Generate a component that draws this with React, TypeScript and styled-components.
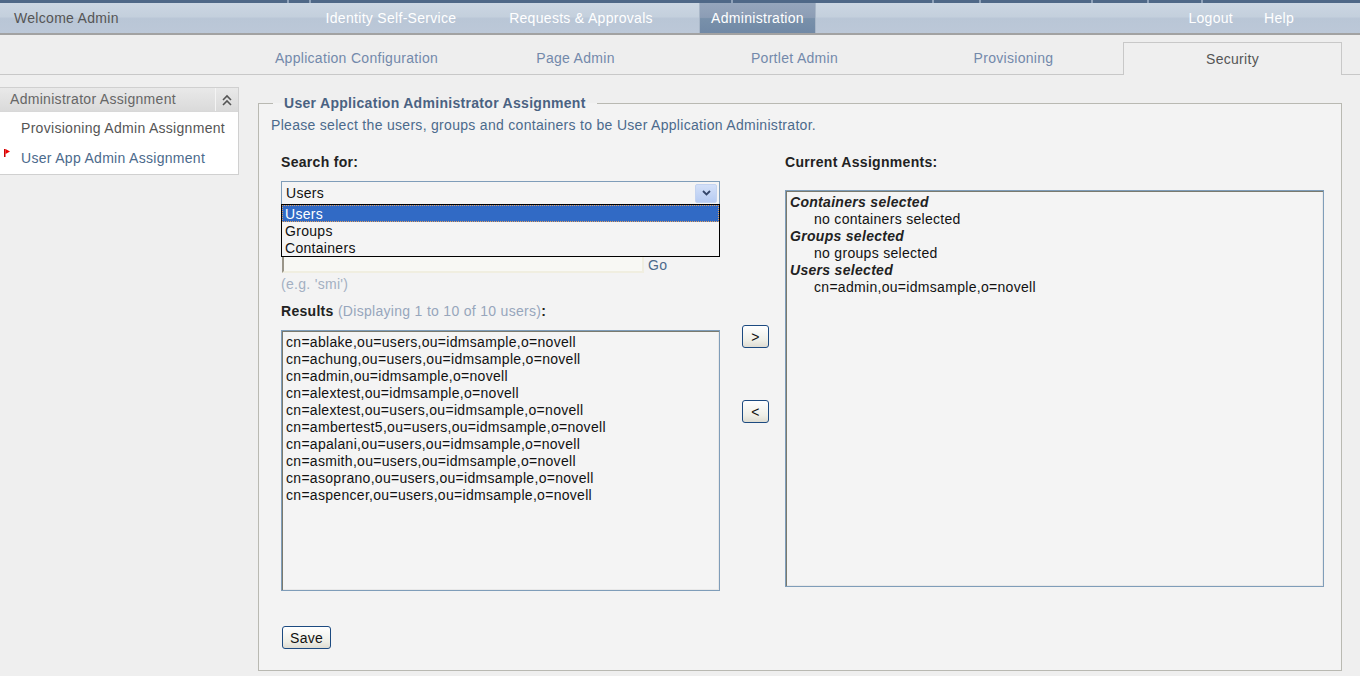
import * as React from 'react'
import styled, { createGlobalStyle, css } from 'styled-components'

const GlobalStyle = createGlobalStyle`
  html, body {
    margin: 0;
    padding: 0;
    background: #efefef;
    font-family: 'Liberation Sans', Arial, sans-serif;
    font-size: 14px;
    color: #222;
  }
  #root {
    min-height: 676px;
  }
`

const font = css`
  font-family: 'Liberation Sans', Arial, sans-serif;
  font-size: 14px;
  letter-spacing: 0.3px;
`

/* ---------- header ---------- */

const Strip = styled.div`
  display: flex;
  gap: 2px;
  height: 3px;
  background: #8fa2b9;
`

const StripSegment = styled.div<{ $w: number }>`
  flex: ${(p) => (p.$w ? `0 0 ${p.$w}px` : '1 1 auto')};
  background: #4f6887;
`

const TopBar = styled.div`
  display: flex;
  align-items: stretch;
  height: 30px;
  background: linear-gradient(#cbd6e2 0%, #c4d0dd 45%, #b9c6d6 52%, #bcc8d8 100%);
  border-bottom: 2px solid #a2a2a2;
`

const Welcome = styled.div`
  ${font};
  flex: 0 0 286px;
  padding-left: 14px;
  line-height: 30px;
  color: #555;
`

const NavItem = styled.div<{ $w: number; $active?: boolean }>`
  ${font};
  flex: 0 0 ${(p) => p.$w}px;
  line-height: 30px;
  text-align: center;
  color: #fff;
  white-space: nowrap;
  ${(p) =>
    p.$active &&
    css`
      margin-left: 19px;
      background: linear-gradient(#96a6bc 0%, #8c9db5 48%, #7890aa 52%, #7189a6 100%);
      box-shadow: inset 1px 0 #a9b7c8, inset -1px 0 #a9b7c8;
    `}
`

const NavRight = styled.div`
  display: flex;
  gap: 31px;
  margin-left: auto;
  padding-right: 66px;
`

const NavLink = styled.div`
  ${font};
  line-height: 30px;
  color: #fff;
`

/* ---------- sub tabs ---------- */

const TabRow = styled.div`
  display: flex;
  align-items: flex-end;
  height: 39px;
  padding-left: 247px;
  border-bottom: 1px solid #c8c8c8;
  background: #eeeeee;
`

const Tab = styled.div<{ $active?: boolean }>`
  ${font};
  flex: 0 0 219px;
  box-sizing: border-box;
  height: 32px;
  line-height: 32px;
  text-align: center;
  color: #7389ab;
  ${(p) =>
    p.$active &&
    css`
      color: #555;
      background: #efefef;
      border: 1px solid #c8c8c8;
      border-bottom: none;
      margin-bottom: -1px;
      height: 33px;
      line-height: 32px;
    `}
`

/* ---------- body ---------- */

const Body = styled.div`
  display: flex;
  align-items: flex-start;
`

const Sidebar = styled.div`
  flex: 0 0 238px;
  margin-top: 12px;
  background: #fff;
  border: 1px solid #d0d0d0;
  border-left: none;
`

const SideHeader = styled.div`
  display: flex;
  height: 23px;
  background: linear-gradient(#e9e9e9, #dadada);
  border-bottom: 1px solid #d8d8d8;
`

const SideTitle = styled.div`
  ${font};
  flex: 1;
  padding-left: 10px;
  line-height: 23px;
  color: #666;
`

const Collapse = styled.div`
  flex: 0 0 22px;
  display: flex;
  align-items: center;
  justify-content: center;
  border-left: 1px solid #f4f4f4;
`

const SideList = styled.div`
  padding: 1px 0 1px;
`

const SideItem = styled.div<{ $current?: boolean }>`
  ${font};
  position: relative;
  height: 30px;
  line-height: 30px;
  padding-left: 21px;
  color: ${(p) => (p.$current ? '#4b6a8c' : '#555')};
`

const Flag = styled.svg`
  position: absolute;
  left: 4px;
  top: 6px;
`

const Fieldset = styled.fieldset`
  flex: 0 0 auto;
  box-sizing: border-box;
  width: 1084px;
  height: 576px;
  margin: 20px 0 0 19px;
  padding: 0 12px 20px;
  border: 1px solid #b9b9b2;
  background: #f3f3f3;
`

const Legend = styled.legend`
  ${font};
  font-weight: bold;
  color: #4a6282;
  padding: 0 11px;
  margin-left: 2px;
  line-height: 16px;
`

const Intro = styled.div`
  ${font};
  margin-top: 6px;
  line-height: 16px;
  color: #4b6a8c;
`

const Columns = styled.div`
  display: grid;
  grid-template-columns: 439px 65px 539px;
  margin: 21px 0 0 10px;
`

const Col = styled.div`
  position: relative;
  display: flex;
  flex-direction: column;
  align-items: flex-start;
`

const Label = styled.div<{ $gap?: number }>`
  ${font};
  font-weight: bold;
  line-height: 16px;
  color: #222;
  margin-bottom: ${(p) => p.$gap ?? 11}px;
`

const Note = styled.span`
  font-weight: normal;
  color: #97a6bc;
`

const Select = styled.div`
  ${font};
  box-sizing: border-box;
  display: flex;
  align-items: center;
  width: 439px;
  height: 24px;
  padding: 0 2px 0 4px;
  border: 1px solid #7f9db9;
  background: #f4f4f4;
  color: #111;
`

const SelectValue = styled.div`
  flex: 1;
`

const SelectButton = styled.div`
  display: flex;
  align-items: center;
  justify-content: center;
  width: 22px;
  height: 19px;
  border-radius: 2px;
  background: linear-gradient(#d3e0f8, #b6cbf2);
  border: 1px solid #c3d3f0;
  box-sizing: border-box;
`

const DropList = styled.div`
  position: absolute;
  top: 50px;
  left: 0;
  z-index: 2;
  box-sizing: border-box;
  width: 439px;
  border: 1px solid #000;
  background: #f4f4f4;
`

const DropOption = styled.div<{ $selected?: boolean }>`
  ${font};
  box-sizing: border-box;
  height: 17px;
  line-height: 16px;
  padding-left: 2px;
  color: ${(p) => (p.$selected ? '#fff' : '#111')};
  background: ${(p) => (p.$selected ? '#316ac5' : 'transparent')};
  border: 1px dotted ${(p) => (p.$selected ? '#e0a060' : 'transparent')};
`

const SearchRow = styled.div`
  display: flex;
  align-items: flex-end;
  margin-top: 48px;
`

const TextInput = styled.div`
  box-sizing: border-box;
  width: 362px;
  height: 20px;
  margin-left: 1px;
  background: #f8f8f4;
  border-left: 2px solid #9a9588;
  border-bottom: 2px solid #f0eee0;
  border-right: 2px solid #f0eee0;
`

const GoLink = styled.div`
  ${font};
  margin-left: 4px;
  line-height: 16px;
  color: #4b6a8c;
`

const Hint = styled.div`
  ${font};
  line-height: 16px;
  margin: 3px 0 11px;
  color: #a3b0c2;
`

const ListBox = styled.div<{ $h: number; $w: number }>`
  ${font};
  box-sizing: border-box;
  width: ${(p) => p.$w}px;
  height: ${(p) => p.$h}px;
  padding: 3px 4px;
  border: 1px solid #7f9db9;
  box-shadow: inset 1px 1px 0 #7a7a6e, inset -1px -1px 0 #e8e8e8;
  background: #f4f4f4;
  color: #111;
`

const Line = styled.div<{ $indent?: boolean; $head?: boolean }>`
  line-height: 17px;
  white-space: nowrap;
  padding-left: ${(p) => (p.$indent ? 24 : 0)}px;
  ${(p) =>
    p.$head &&
    css`
      font-weight: bold;
      font-style: italic;
      color: #222;
    `}
`

const Button = styled.button<{ $top: number }>`
  ${font};
  box-sizing: border-box;
  margin-top: ${(p) => p.$top}px;
  height: 23px;
  padding: 0 7px;
  border: 1px solid #1c4a80;
  border-radius: 3px;
  background: linear-gradient(#ffffff, #eeeee6 70%, #dedcd2);
  color: #111;
  cursor: pointer;
`

const MoveButton = styled(Button)`
  margin-left: 22px;
  width: 27px;
  padding: 0;
`

const SaveButton = styled(Button)`
  margin-left: 1px;
`

const stripWidths = [287, 20, 420, 199, 45, 110, 54, 52, 0]

const results = [
  'cn=ablake,ou=users,ou=idmsample,o=novell',
  'cn=achung,ou=users,ou=idmsample,o=novell',
  'cn=admin,ou=idmsample,o=novell',
  'cn=alextest,ou=idmsample,o=novell',
  'cn=alextest,ou=users,ou=idmsample,o=novell',
  'cn=ambertest5,ou=users,ou=idmsample,o=novell',
  'cn=apalani,ou=users,ou=idmsample,o=novell',
  'cn=asmith,ou=users,ou=idmsample,o=novell',
  'cn=asoprano,ou=users,ou=idmsample,o=novell',
  'cn=aspencer,ou=users,ou=idmsample,o=novell',
]

const tabs = ['Application Configuration', 'Page Admin', 'Portlet Admin', 'Provisioning', 'Security']

const App: React.FunctionComponent = () => (
  <>
    <GlobalStyle />
    <Strip>
      {stripWidths.map((w, i) => (
        <StripSegment key={i} $w={w} />
      ))}
    </Strip>
    <TopBar>
      <Welcome>Welcome Admin</Welcome>
      <NavItem $w={182}>Identity Self-Service</NavItem>
      <NavItem $w={198}>Requests &amp; Approvals</NavItem>
      <NavItem $w={117} $active>
        Administration
      </NavItem>
      <NavRight>
        <NavLink>Logout</NavLink>
        <NavLink>Help</NavLink>
      </NavRight>
    </TopBar>

    <TabRow>
      {tabs.map((t) => (
        <Tab key={t} $active={t === 'Security'}>
          {t}
        </Tab>
      ))}
    </TabRow>

    <Body>
      <Sidebar>
        <SideHeader>
          <SideTitle>Administrator Assignment</SideTitle>
          <Collapse>
            <svg width="12" height="14" viewBox="0 0 12 14" fill="none" stroke="#555" strokeWidth="1.6">
              <path d="M2 7 L6 3 L10 7" />
              <path d="M2 12 L6 8 L10 12" />
            </svg>
          </Collapse>
        </SideHeader>
        <SideList>
          <SideItem>Provisioning Admin Assignment</SideItem>
          <SideItem $current>
            <Flag width="7" height="8" viewBox="0 0 7 8">
              <rect x="0" y="0" width="1.5" height="8" fill="#c00" />
              <path d="M1.5 0 L6 2.5 L1.5 5 Z" fill="#e00" />
            </Flag>
            User App Admin Assignment
          </SideItem>
        </SideList>
      </Sidebar>

      <Fieldset>
        <Legend>User Application Administrator Assignment</Legend>
        <Intro>Please select the users, groups and containers to be User Application Administrator.</Intro>
        <Columns>
          <Col>
            <Label>Search for:</Label>
            <Select>
              <SelectValue>Users</SelectValue>
              <SelectButton>
                <svg width="9" height="6" viewBox="0 0 9 6" fill="none" stroke="#34466a" strokeWidth="1.8">
                  <path d="M1 1 L4.5 4.5 L8 1" />
                </svg>
              </SelectButton>
            </Select>
            <DropList>
              <DropOption $selected>Users</DropOption>
              <DropOption>Groups</DropOption>
              <DropOption>Containers</DropOption>
            </DropList>
            <SearchRow>
              <TextInput />
              <GoLink>Go</GoLink>
            </SearchRow>
            <Hint>(e.g. 'smi')</Hint>
            <Label $gap={11}>
              Results <Note>(Displaying 1 to 10 of 10 users)</Note>:
            </Label>
            <ListBox $w={439} $h={261}>
              {results.map((r, i) => (
                <Line key={i}>{r}</Line>
              ))}
            </ListBox>
            <SaveButton $top={35}>Save</SaveButton>
          </Col>

          <Col>
            <MoveButton $top={171}>&gt;</MoveButton>
            <MoveButton $top={52}>&lt;</MoveButton>
          </Col>

          <Col>
            <Label $gap={20}>Current Assignments:</Label>
            <ListBox $w={539} $h={397}>
              <Line $head>Containers selected</Line>
              <Line $indent>no containers selected</Line>
              <Line $head>Groups selected</Line>
              <Line $indent>no groups selected</Line>
              <Line $head>Users selected</Line>
              <Line $indent>cn=admin,ou=idmsample,o=novell</Line>
            </ListBox>
          </Col>
        </Columns>
      </Fieldset>
    </Body>
  </>
)

export default App
